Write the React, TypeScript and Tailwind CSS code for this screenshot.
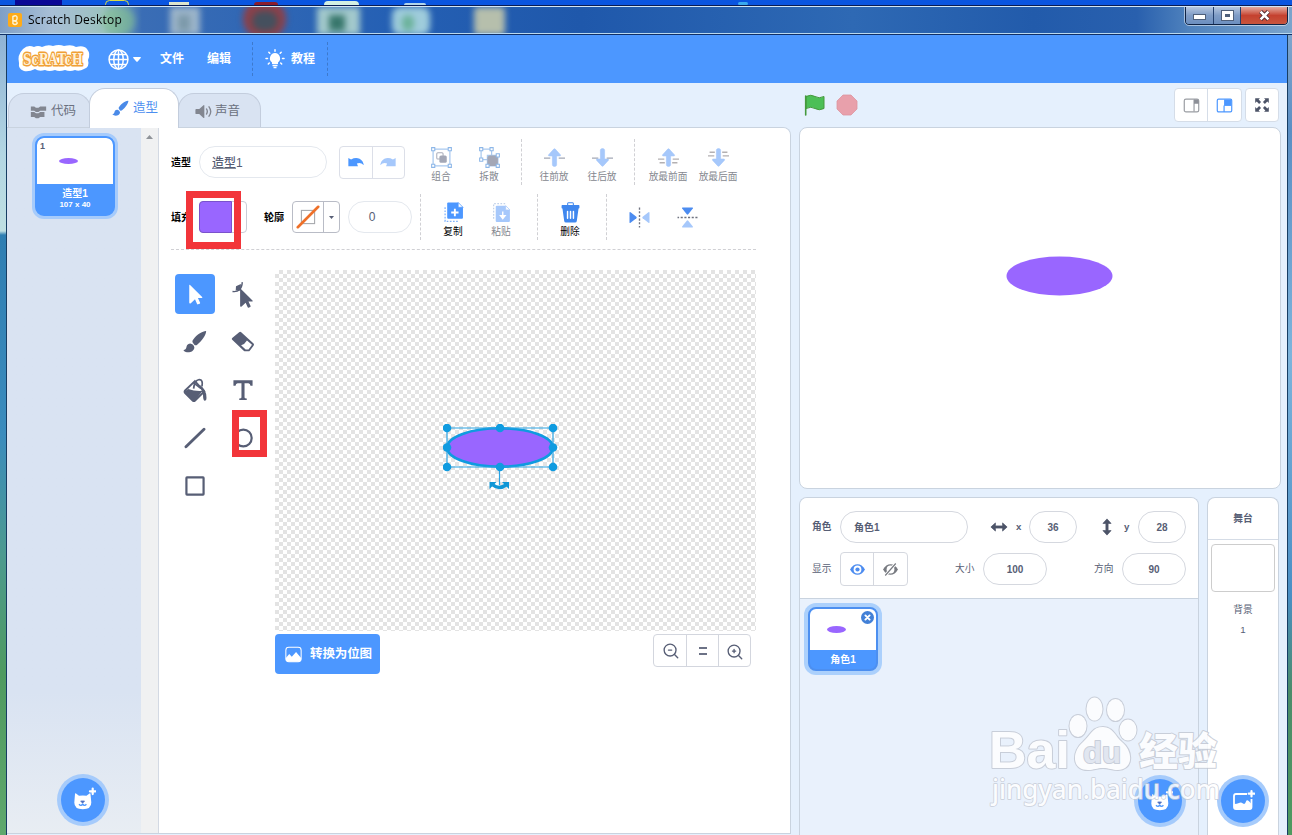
import type { ReactNode } from "react";
import clsx from "clsx";

const FONT =
  "font-['Liberation_Sans','Noto_Sans_CJK_SC',sans-serif]";

interface IconProps {
  size?: number;
  className?: string;
  children: ReactNode;
}

function Icon({ size = 20, className, children }: IconProps) {
  return (
    <svg
      width={size}
      height={size}
      viewBox="0 0 20 20"
      fill="none"
      className={clsx("shrink-0", className)}
      aria-hidden="true"
    >
      {children}
    </svg>
  );
}

/* ---------- window chrome ---------- */

function TitleBar() {
  return (
    <div className="h-[30px] shrink-0 border-t border-[#0a1c52] flex flex-col">
      <div className="relative flex-1 border-t border-[#d3e6f5] border-b border-b-[#b9d9f0] bg-[linear-gradient(90deg,#7f9fc6_0%,#a8bfd6_4%,#9cc2c0_8%,#3a6db5_11%,#2560b4_30%,#1f58ab_45%,#2e69b4_66%,#225bab_80%,#2960ae_88%,#4f82bd_92%,#7ba4cc_100%)] flex justify-between overflow-hidden">
        {/* blurred desktop icons behind the glass */}
        <div className="absolute inset-0 blur-[3px]" aria-hidden="true">
          <div className="absolute left-[102px] top-0 h-7 w-[33px] rounded-full bg-[#86c58d]/60" />
          <div className="absolute left-[170px] top-0 h-7 w-[30px] bg-[#b6c8cf]/80" />
          <div className="absolute left-[178px] top-2 h-4 w-3 bg-[#6f8d9d]/70" />
          <div className="absolute left-[243px] -top-2 h-10 w-[43px] rounded-full bg-[#8c4049]" />
          <div className="absolute left-[252px] top-1 h-5 w-[26px] rounded-full bg-[#45505e]" />
          <div className="absolute left-[317px] top-0 h-7 w-[43px] bg-[#a3c9cc]" />
          <div className="absolute left-[329px] top-2 h-4 w-[16px] bg-[#38776c]" />
          <div className="absolute left-[392px] top-0 h-7 w-[38px] rounded-lg bg-[#9fccdb]" />
          <div className="absolute left-[402px] top-2 h-4 w-[12px] rounded-full bg-[#6bb29a]" />
          <div className="absolute left-[474px] top-0 h-7 w-[31px] rounded bg-[#b6bfac]" />
        </div>
        <div className="relative flex items-center pl-2">
          <Icon size={14}>
            <rect width="20" height="20" rx="3" fill="#ffab19" />
            <path d="M7 5q6-3 6 2t-5 4q6 1 5 4-3 3-6 0z" stroke="#fff3d2" strokeWidth="2" />
          </Icon>
          <span className="ml-1.5 font-['Open_Sans',sans-serif] text-[12px] tracking-[0.22px] text-black whitespace-nowrap">
            Scratch Desktop
          </span>
        </div>
        <div className="relative mr-1 flex h-[18px] w-[103px] rounded-b-[4px] border border-t-0 border-[#0f2344] overflow-hidden outline outline-white/50">
          <div className="w-[28px] border-r border-[#24406e] bg-linear-to-b from-[#b5c6df] via-[#7f9cc6] to-[#6c8fbf] flex justify-center items-end pb-[5px]">
            <span className="h-1 w-[11px] bg-white outline outline-[#4f607b]" />
          </div>
          <div className="w-[27px] border-r border-[#24406e] bg-linear-to-b from-[#b5c6df] via-[#7f9cc6] to-[#6c8fbf] flex justify-center items-center">
            <span className="h-[9px] w-[11px] border-[3px] border-white bg-[#4f607b] outline outline-[#4f607b]" />
          </div>
          <div className="flex-1 bg-linear-to-b from-[#e2a9a0] via-[#c5412f] to-[#c8553d] flex justify-center items-center">
            <Icon size={13}>
              <path d="M4 4l12 12M16 4L4 16" stroke="#4b2b33" strokeWidth="6.500" />
              <path d="M4 4l12 12M16 4L4 16" stroke="#fff" strokeWidth="4" />
            </Icon>
          </div>
        </div>
      </div>
      <div className="h-px bg-[#102f66]" />
    </div>
  );
}

function MenuBar() {
  return (
    <div className="h-12 shrink-0 bg-[#4c97ff] flex items-center text-white text-[12px] font-bold">
      <svg width="80" height="36" viewBox="0 0 80 36" className="ml-[7px]">
        <path
          d="M9 8q5-5 11-2 4-2 8 0 6-3 11-1 6-2 11 0 8-2 12 1 8-2 11 2 4 5 1 11 2 7-4 9-5 3-9 1-5 2-10 0-6 2-10 0-6 2-10 0-6 2-10-1-6 3-11 2-6-2-5-8-2-8 4-14z"
          fill="#fff"
        />
        <text
          x="9"
          y="24"
          fontFamily="'DejaVu Serif', serif"
          fontWeight="bold"
          fontSize="17"
          textLength="60"
          lengthAdjust="spacingAndGlyphs"
          fill="#fff0d8"
          stroke="#f0a036"
          strokeWidth="3"
          strokeLinejoin="round"
          paintOrder="stroke"
        >
          ScRATcH
        </text>
      </svg>
      <Icon size={21} className="ml-[14px]">
        <g stroke="#fff" strokeWidth="1.400">
          <circle cx="10" cy="10" r="9" />
          <ellipse cx="10" cy="10" rx="4.500" ry="9" />
          <path d="M10 1v18M1 10h18M2.500 5.300h15M2.500 14.700h15" />
        </g>
      </Icon>
      <svg width="8" height="5" viewBox="0 0 8 5" className="ml-1">
        <path d="M.5 0h7q.8.5 0 1.300L4.700 4.500q-.7.600-1.400 0L.5 1.300Q-.3.500.5 0z" fill="#fff" />
      </svg>
      <span className="ml-[19px] w-6 whitespace-nowrap">文件</span>
      <span className="ml-[23px] w-6 whitespace-nowrap">编辑</span>
      <div className="ml-[21px] h-[34px] border-l border-dashed border-[#3d79cc]" />
      <Icon size={20} className="ml-3">
        <path d="M10 4a5.300 5.300 0 0 0-3 9.500V15h6v-1.500A5.300 5.300 0 0 0 10 4z" fill="#fff" />
        <path d="M7.500 16.500h5M8.500 18.500h3" stroke="#fff" strokeWidth="1.500" />
        <path d="M10 .8v1.400M3.800 3.200l1 1M16.200 3.200l-1 1M1 9.500h1.500M17.500 9.500H19M3.300 15l1-1M16.700 15l-1-1" stroke="#fff" strokeWidth="1.500" strokeLinecap="round" />
      </Icon>
      <span className="ml-1.5 w-6 whitespace-nowrap">教程</span>
      <div className="ml-[12px] h-[34px] border-l border-dashed border-[#3d79cc]" />
    </div>
  );
}

/* ---------- tabs ---------- */

function Tabs() {
  const idle =
    "h-[35px] rounded-t-[16px] border border-b-0 border-[#c3cddd] bg-[#d9e3f2] text-[#6b7180] flex items-center";
  return (
    <div className="h-[45px] -mb-px flex items-end text-[12.5px] whitespace-nowrap">
      <div className={clsx(idle, "ml-px w-[83px] pl-[21px]")}>
        <Icon size={17}>
          <path d="M1 4h4l2 1.500h3L12 4h7v5h-7l-2 1.500H7L5 9H1zM1 10.500h4L7 12h3l2-1.500h5v6h-5L10 18H7l-2-1.500H1z" fill="#828690" />
        </Icon>
        <span className="ml-1">代码</span>
      </div>
      <div className="relative -ml-[2px] h-10 w-[90px] rounded-t-[16px] border border-b-0 border-[#c3cddd] bg-white text-[#4c8ff0] flex items-center pl-[22px]">
        <Brush size={17} color="#4a8ae8" />
        <span className="ml-[4px]">造型</span>
      </div>
      <div className={clsx(idle, "-ml-px w-[83px] pl-4")}>
        <Icon size={17}>
          <path d="M1.500 7h3.500l5-4.500q1-.5 1 .5v14q0 1-1 .5L5 13H1.500q-1 0-1-1V8q0-1 1-1z" fill="#828690" />
          <path d="M13.500 7q2 3 0 6M16.500 4.500q4 5.500 0 11" stroke="#828690" strokeWidth="1.600" strokeLinecap="round" />
        </Icon>
        <span className="ml-[3px]">声音</span>
      </div>
    </div>
  );
}

function Brush({ size, color }: { size: number; color: string }) {
  return (
    <Icon size={size}>
      <path d="M18.800.8C15 1.200 9.500 5.500 7.800 9.200q-.4 1.100 1.800 3.200 1.200.8 2.200-.2C15.500 9.500 19 4.500 19.300 1.300q0-.6-.5-.5z" fill={color} />
      <path d="M6.600 11.400q2.500.6 2.900 3.300C8.800 18.500 3.500 19.800.6 17.200q-.4-.6.600-.7c1.900-.4 1.300-2.300 2.300-3.900q1.100-1.500 3.100-1.200z" fill={color} />
    </Icon>
  );
}

/* ---------- costume list ---------- */

function AddButton({ className, children }: { className: string; children: ReactNode }) {
  return (
    <button
      className={clsx(
        "absolute size-[44px] rounded-full bg-[#4c97ff] ring-4 ring-[#a6cbfb] flex items-center justify-center",
        className,
      )}
    >
      {children}
    </button>
  );
}

function CatIcon() {
  return (
    <svg width="26" height="26" viewBox="0 0 26 26">
      <path d="M5 7q0-1 1-.5l3 2.300q4-.6 7.500 0L19.500 6.500q1-.5 1 .5l.8 8.500q0 6.800-8.500 6.800t-8.500-6.800z" fill="#fff" />
      <path d="M10.700 14h3.800l-1.900 2.200z" fill="#4c6fc0" stroke="#4c6fc0" strokeWidth=".8" />
      <path d="M9 17.300q2 2.200 3.700 0 1.700 2.200 3.700 0" stroke="#4c97ff" strokeWidth="1.400" fill="none" />
      <path d="M22.700 1.500v5.600M19.900 4.300h5.600" stroke="#fff" strokeWidth="2.200" strokeLinecap="round" />
    </svg>
  );
}

function CostumeList() {
  return (
    <div className="relative w-[134px] bg-linear-to-b from-[#d9e3f2] from-80% to-[#e8edf3] pt-[8px]">
      <div className="ml-[28px] size-[80px] rounded-[9px] border-2 border-[#4c97ff] ring-[3px] ring-[#a6cbfb] bg-[#4c97ff] overflow-hidden">
        <div className="h-[46px] rounded-t-[6px] bg-white px-[3px] py-[2px] text-[9px] leading-[12px] text-[#575e75] font-bold">
          1
          <div className="ml-[19px] mt-[6px] h-[6px] w-[19px] rounded-[50%] bg-[#9966ff]" />
        </div>
        <div className="pt-[3px] text-center text-white font-bold">
          <div className="text-[10px] leading-[13px]">造型1</div>
          <div className="text-[8px] leading-[10px]">107 x 40</div>
        </div>
      </div>
      <AddButton className="left-[54px] bottom-[11px]">
        <CatIcon />
      </AddButton>
    </div>
  );
}

/* ---------- paint editor ---------- */

interface ToolButtonProps {
  label?: string;
  dim?: boolean;
  wide?: boolean;
  children: ReactNode;
}

function ToolButton({ label, dim, wide, children }: ToolButtonProps) {
  return (
    <button
      className={clsx(
        "flex flex-col items-center justify-center shrink-0 h-[46px]",
        wide ? "w-[50px]" : "w-12",
        label && "pt-[5px]",
      )}
    >
      {children}
      {label && (
        <span
          className={clsx(
            "mt-[2px] text-[9.7px] leading-[13px] whitespace-nowrap",
            dim ? "text-[#85888f]" : "text-black",
          )}
        >
          {label}
        </span>
      )}
    </button>
  );
}

function Divider({ className }: { className: string }) {
  return <div className={clsx("h-[46px] w-px shrink-0 border-l border-dashed border-[#d0d0d4]", className)} />;
}

function Arrow({ down, lines }: { down?: boolean; lines: number }) {
  const rotate = down ? "rotate(180 10 10)" : undefined;
  return (
    <Icon size={21}>
      {lines === 1 ? (
        <path d="M0 10.500h6M14 10.500h6" stroke="#a3a8b5" strokeWidth="1.200" />
      ) : (
        <path
          d={down ? "M1.500 5h5M13.500 5h5M0 8.500h6M14 8.500h6" : "M0 11.500h6M14 11.500h6M1.500 15h5M13.500 15h5"}
          stroke="#b3b0b2"
          strokeWidth="1.200"
        />
      )}
      <path d="M9.300 2Q10 1.300 10.700 2l5 5.500q.5 1-.7 1H12v8.500q0 1.500-2 1.500t-2-1.500V8.500H5q-1.200 0-.7-1z" fill="#a6c8fb" stroke="#a6c8fb" strokeWidth=".6" transform={rotate} />
    </Icon>
  );
}

const UNDO = "M1.500 5.500l3 1.800Q9.500 4.500 14 6.500q4 2.200 4.700 7.200-3.500-3.700-7.700-2l1.200 3H1.500z";

function PaintToolbar() {
  return (
    <div className="ml-3 mr-[34px] pt-[11px] pb-[9px] border-b border-dashed border-[#d0d0d4] flex flex-col gap-[9px] text-[#575e75]">
      <div className="flex items-center h-[46px]">
        <span className="w-7 text-[10px] font-bold text-black whitespace-nowrap">造型</span>
        <div className="w-32 h-8 rounded-full border border-[#e4e8ee] flex items-center pl-3 pt-px text-[12px] font-medium">
          <span className="underline decoration-[#8b8f9c] underline-offset-1">造型</span>1
        </div>
        <div className="ml-3 w-[66px] h-[33px] flex rounded border border-[#dcdfe8]">
          <button className="flex-1 flex items-center justify-center border-r border-[#dcdfe8]">
            <Icon size={18}>
              <path d={UNDO} fill="#4c97ff" />
            </Icon>
          </button>
          <button className="flex-1 flex items-center justify-center">
            <Icon size={18} className="-scale-x-100">
              <path d={UNDO} fill="#a6c8fb" />
            </Icon>
          </button>
        </div>
        <div className="ml-3 flex">
          <ToolButton label="组合" dim>
            <Icon size={21}>
              <path d="M2 2h16v16H2z" stroke="#a9c9ef" strokeWidth="1.200" />
              <path d="M.6.600h3v3h-3zM16.400.600h3v3h-3zM.6 16.400h3v3h-3zM16.400 16.400h3v3h-3z" fill="#fff" stroke="#8db7e8" />
              <rect x="5.500" y="5.500" width="6" height="6" rx="1" stroke="#a9adba" />
              <rect x="8" y="8" width="7" height="7" rx="1.500" fill="#a3a7b6" />
            </Icon>
          </ToolButton>
          <ToolButton label="拆散" dim>
            <Icon size={21}>
              <path d="M2 2h10v10H2zM8 8h10v10H8z" stroke="#a9c9ef" strokeWidth="1.200" />
              <rect x="8" y="8" width="10" height="10" rx="2.500" fill="#a3a7b6" />
              <path d="M.6.600h3v3h-3zM10.500.600h3v3h-3zM.6 10.500h3v3h-3zM16.400 6.500h3v3h-3zM6.600 16.400h3v3h-3zM16.400 16.400h3v3h-3z" fill="#fff" stroke="#8db7e8" />
            </Icon>
          </ToolButton>
        </div>
        <Divider className="ml-2" />
        <div className="ml-2 flex">
          <ToolButton label="往前放" dim>
            <Arrow lines={1} />
          </ToolButton>
          <ToolButton label="往后放" dim>
            <Arrow down lines={1} />
          </ToolButton>
        </div>
        <Divider className="ml-2" />
        <div className="ml-2 flex">
          <ToolButton label="放最前面" dim wide>
            <Arrow lines={2} />
          </ToolButton>
          <ToolButton label="放最后面" dim wide>
            <Arrow down lines={2} />
          </ToolButton>
        </div>
      </div>

      <div className="flex items-center h-[46px]">
        <span className="w-7 text-[10px] font-bold text-black whitespace-nowrap">填充</span>
        <div className="w-12 h-8 flex rounded border border-[#c9ccd6]">
          <div className="-m-px w-[33px] rounded-l border border-[#7a52cc] bg-[#9966ff]" />
        </div>
        <span className="ml-[17px] w-7 text-[10px] font-bold text-black whitespace-nowrap">轮廓</span>
        <div className="w-12 h-8 flex rounded border border-[#b9bcc6]">
          <div className="w-[31px] border-r border-[#b9bcc6] flex items-center justify-center">
            <Icon size={24}>
              <rect x="4.500" y="4.500" width="11" height="11" stroke="#a6a8ad" strokeWidth=".9" />
              <path d="M1.500 18.500L18.500 1.500" stroke="#ee7029" strokeWidth="2.200" strokeLinecap="round" />
            </Icon>
          </div>
          <div className="flex-1 flex items-center justify-center">
            <svg width="5" height="3" viewBox="0 0 5 3">
              <path d="M0 0h5L2.500 3z" fill="#575e75" />
            </svg>
          </div>
        </div>
        <div className="ml-2 w-16 h-8 rounded-full border border-[#e4e8ee] flex items-center justify-center pr-4 text-[12px]">
          0
        </div>
        <Divider className="ml-2" />
        <div className="ml-2 flex">
          <ToolButton label="复制">
            <Icon size={21}>
              <path d="M4 1.500q0-1 1-1h9.500l4.500 4.500v10q0 1-1 1H5q-1 0-1-1z" fill="#4c97ff" />
              <path d="M14.500.5v4.500H19z" fill="#fff" stroke="#4c97ff" strokeWidth=".6" />
              <path d="M11.300 6.500v7M7.800 10h7" stroke="#fff" strokeWidth="1.800" />
              <path d="M2 5v13.500h13" stroke="#7fb2fb" strokeWidth="1.200" strokeDasharray="1.600 1.400" />
            </Icon>
          </ToolButton>
          <ToolButton label="粘贴" dim>
            <Icon size={21}>
              <path d="M2.500 16V1.500h11" stroke="#c3d3ea" strokeWidth="1.200" strokeDasharray="1.600 1.400" />
              <path d="M4.500 4.500q0-1 1-1h8.500l4 4v10.500q0 1-1 1H5.500q-1 0-1-1z" fill="#a6c8fb" />
              <path d="M14 3.500v4h4z" fill="#fff" stroke="#a6c8fb" strokeWidth=".6" />
              <path d="M11.200 9v5M9 13l2.200 2.800L13.400 13z" stroke="#fff" strokeWidth="1.300" fill="#fff" />
            </Icon>
          </ToolButton>
        </div>
        <Divider className="ml-3" />
        <div className="ml-2 flex">
          <ToolButton label="删除">
            <Icon size={21}>
              <path d="M1.500 3.500q0-.7.7-.7h4.600V1.500Q7 .3 8.200.3h3.600Q13 .3 13.200 1.500v1.300h4.600q.7 0 .7.700v2q0 .700-.7.700H2.200q-.7 0-.7-.700zM7.800 1.300v1.500h4.400V1.300zM2.300 6h15.400L16 18q-.2 1.500-1.700 1.500H5.700Q4.200 19.500 4 18z" fill="#3f87ee" />
              <path d="M7.200 9v6.500M10 9v6.500M12.800 9v6.500" stroke="#fff" strokeWidth="1.400" strokeLinecap="round" />
            </Icon>
          </ToolButton>
        </div>
        <Divider className="ml-3" />
        <div className="ml-2 flex">
          <ToolButton>
            <Icon size={21}>
              <path d="M10 .5v19" stroke="#6f7380" strokeWidth="1.300" strokeDasharray="2 1.500" />
              <path d="M.5 5.500q0-1.200 1-.6L7 9.300q.8.700 0 1.400l-5.500 4.400q-1 .6-1-.6z" fill="#4c8cf0" />
              <path d="M19.500 5.500q0-1.200-1-.6L13 9.300q-.8.700 0 1.400l5.500 4.400q1 .6 1-.6z" fill="#a6c8fb" />
            </Icon>
          </ToolButton>
          <ToolButton>
            <Icon size={21} className="rotate-90">
              <path d="M10 .5v19" stroke="#6f7380" strokeWidth="1.300" strokeDasharray="2 1.500" />
              <path d="M.5 5.500q0-1.200 1-.6L7 9.300q.8.700 0 1.400l-5.500 4.400q-1 .6-1-.6z" fill="#4c8cf0" />
              <path d="M19.500 5.500q0-1.200-1-.6L13 9.300q-.8.700 0 1.400l5.500 4.400q1 .6 1-.6z" fill="#a6c8fb" />
            </Icon>
          </ToolButton>
        </div>
      </div>
    </div>
  );
}

const POINTER = "M4.500 1.200q0-1 .8-.3l11.500 11.500q.8.900-.4.900h-3.600l2.100 4.500q.2.600-.4.900l-1.600.700q-.6.200-.9-.4l-2-4.600-4 3.900q-1.500.800-1.500-.8z";

// 绘图工具（两列）
const tools: { name: string; icon: ReactNode }[] = [
  {
    name: "选择",
    icon: (
      <Icon size={22}>
        <path d={POINTER} fill="#fff" transform="translate(.5 1) scale(.95)" />
      </Icon>
    ),
  },
  {
    name: "变形",
    icon: (
      <Icon size={28}>
        <path d={POINTER} fill="#575e75" transform="translate(4.700 5.800) scale(.72)" />
        <path d="M2.500 8.200Q9 9 9.500 1.500" stroke="#575e75" strokeWidth="1" />
        <path d="M5 4.500l3.500-1.700v4.700H4.800z" fill="#575e75" />
      </Icon>
    ),
  },
  { name: "画笔", icon: <Brush size={24} color="#575e75" /> },
  {
    name: "橡皮擦",
    icon: (
      <Icon size={24}>
        <path d="M6.800 1.800q.9-.7 1.700 0l10.300 9.400q.8.900 0 1.900l-3 4q-.5.700-1.300.7h-2.700q-.7 0-1.200-.5L1 8.200q-.8-.900 0-1.600z" fill="#575e75" />
        <path d="M13.300 8.700l4.200 3.600-2.900 4h-2.400L8.400 12.800q2.800-.7 4.900-4.100z" fill="#fff" />
      </Icon>
    ),
  },
  {
    name: "填充",
    icon: (
      <Icon size={25}>
        <path d="M9.500 2.500L1.700 10q-.9 1 0 2l6 6q1 .9 2 0l7.300-7.300z" stroke="#575e75" strokeWidth="1.500" />
        <path d="M1.500 10.500l2.800-1.800q5 2 11.500 1.500l-6 7.500q-1 1-2 0l-6-6z" fill="#575e75" />
        <path d="M8.500 8.500Q9 2 13 1.200q3.200 0 2.200 5.500M8 3.500l6.500 5" stroke="#575e75" strokeWidth="1.400" />
        <path d="M13.500 5.500q5.500 3.500 5.300 10.500 0 2.500-1.500 2.200-1.300-.7-1.300-4.700z" fill="#575e75" />
      </Icon>
    ),
  },
  {
    name: "文本",
    icon: (
      <Icon size={22}>
        <path d="M1.300 1.200h17.400v5h-1.900q-.2-2.400-1.900-2.400h-3.500v13q0 .9 2 1v1.400H6.600v-1.400q2-.1 2-1v-13H5.100q-1.700 0-1.900 2.400H1.300z" fill="#575e75" />
      </Icon>
    ),
  },
  {
    name: "线段",
    icon: (
      <Icon size={22}>
        <path d="M1.800 18L18.200 2" stroke="#575e75" strokeWidth="2.600" strokeLinecap="round" />
      </Icon>
    ),
  },
  {
    name: "圆",
    icon: (
      <Icon size={22}>
        <circle cx="10.300" cy="10" r="7.600" stroke="#575e75" strokeWidth="2" />
      </Icon>
    ),
  },
  {
    name: "矩形",
    icon: (
      <Icon size={22}>
        <rect x="2.200" y="2.200" width="15.600" height="15.600" rx=".5" stroke="#575e75" strokeWidth="2" />
      </Icon>
    ),
  },
];

function Canvas() {
  const handles = [
    [4, 4], [57, 4], [110, 4],
    [4, 23.5], [110, 23.5],
    [4, 43], [57, 43], [110, 43],
  ];
  return (
    <div className="relative w-[481px] h-[361px] bg-[repeating-conic-gradient(#e3e3e3_0%_25%,#fff_0%_50%)] bg-[length:8px_8px]">
      <svg width="118" height="72" viewBox="0 0 118 72" className="absolute left-[168px] top-[154px]" fill="none">
        <ellipse cx="57" cy="23.500" rx="53" ry="19.200" fill="#9966ff" stroke="#0f9be0" strokeWidth="2.600" />
        <path d="M4 4h106v39H4zM56.500 43v18" stroke="#2ba3e3" strokeWidth="1.200" />
        {handles.map(([x, y]) => (
          <circle key={`${x}-${y}`} cx={x} cy={y} r="4.300" fill="#0f9be0" />
        ))}
        <path d="M50 61q6 5 13 0" stroke="#0f96d6" strokeWidth="3.400" />
        <path d="M46.500 58h7l-7 7zM66 58h-7l7 7z" fill="#0f96d6" />
      </svg>
    </div>
  );
}

function Magnifier({ plus }: { plus?: boolean }) {
  return (
    <Icon size={17}>
      <g stroke="#575e75" strokeWidth="1.600" strokeLinecap="round">
        <circle cx="9.500" cy="9.500" r="7" />
        <path d={plus ? "M15 15l3.500 3.500M7.600 9.500h3.800M9.500 7.600v3.800" : "M15 15l3.500 3.500M7.600 9.500h3.800"} />
      </g>
    </Icon>
  );
}

function PaintEditor() {
  return (
    <div className="flex-1 bg-white border-l border-[#d3d9e3]">
      <PaintToolbar />
      <div className="flex pt-5">
        <div className="ml-4 mt-1 mr-[12px] grid grid-cols-2 gap-2 content-start">
          {tools.map((tool, i) => (
            <button
              key={tool.name}
              aria-label={tool.name}
              className={clsx(
                "size-10 rounded flex items-center justify-center",
                i === 0 && "bg-[#4c97ff]",
              )}
            >
              {tool.icon}
            </button>
          ))}
        </div>
        <div>
          <Canvas />
          <div className="mt-[3px] pr-[5px] flex items-start justify-between">
            <button className="w-[105px] h-10 rounded bg-[#4c97ff] text-white text-[12.5px] font-bold flex items-center pl-[10px] whitespace-nowrap">
              <Icon size={17}>
                <rect x="1" y="1.500" width="18" height="17" rx="3.500" stroke="#fff" strokeWidth="1.200" />
                <path d="M1 14l4-4.500 3 3 5-5.500 6 7v2q0 2.500-2.500 2.500h-13Q1 18.500 1 16z" fill="#fff" />
              </Icon>
              <span className="ml-2 tracking-[-0.1px]">转换为位图</span>
            </button>
            <div className="w-[98px] h-[33px] pt-px rounded border border-[#d3d6de] flex">
              <button className="w-[33px] -mt-px border-r border-[#d3d6de] flex items-center justify-center">
                <Magnifier />
              </button>
              <button className="w-[32px] -mt-px border-r border-[#d3d6de] flex items-center justify-center">
                <span className="h-2 w-2 border-y-2 border-[#6c7286]" />
              </button>
              <button className="flex-1 flex items-center justify-center">
                <Magnifier plus />
              </button>
            </div>
          </div>
        </div>
      </div>
    </div>
  );
}

/* ---------- stage column ---------- */

function StageHeader() {
  return (
    <div className="h-11 flex items-center pl-[5px] pr-[2px]">
      <svg width="22" height="22" viewBox="0 0 22 22" fill="none">
        <path d="M2 2.500q5-2.500 9 0t9 0v12q-5 2.500-9 0t-9 0z" fill="#4cbf56" stroke="#45993d" />
        <path d="M1.700 2v19" stroke="#45993d" strokeWidth="1.600" strokeLinecap="round" />
      </svg>
      <svg width="22" height="22" viewBox="0 0 22 22" className="ml-[10px]">
        <path d="M7 1h8l6 6v8l-6 6H7l-6-6V7z" fill="#e8a0ab" stroke="#dd949f" strokeWidth=".8" />
      </svg>
      <div className="ml-auto w-[68px] h-[34px] rounded border border-[#d5dde8] bg-white flex">
        <button className="w-[33px] flex items-center justify-center border-r border-[#d5dde8]">
          <Icon size={17}>
            <rect x="1.500" y="2.500" width="17" height="15" rx="2" stroke="#9a9da3" strokeWidth="1.400" />
            <path d="M13 3v14" stroke="#9a9da3" strokeWidth="1.400" />
            <path d="M13 3h4l1.500 1.500V8H13z" fill="#8c8f97" />
          </Icon>
        </button>
        <button className="flex-1 flex items-center justify-center">
          <Icon size={17}>
            <rect x="1.500" y="2.500" width="17" height="15" rx="1.500" stroke="#4c97ff" strokeWidth="1.400" />
            <path d="M9.500 3H18v7.500H9.500z" fill="#4c97ff" />
            <path d="M9.500 10v7.500" stroke="#4c97ff" strokeWidth="1.400" />
          </Icon>
        </button>
      </div>
      <button className="ml-[3px] size-[34px] rounded border border-[#d5dde8] bg-white flex items-center justify-center">
        <Icon size={16}>
          <path d="M1.500 1.500h6L5.800 3.200l3 3-2.400 2.400-3-3L1.500 7.500zM18.500 1.500h-6l1.700 1.700-3 3 2.400 2.400 3-3 1.900 1.900zM1.500 18.500h6l-1.700-1.700 3-3-2.400-2.400-3 3-1.900-1.900zM18.500 18.500h-6l1.700-1.700-3-3 2.400-2.400 3 3 1.900-1.900z" fill="#4d5468" />
        </Icon>
      </button>
    </div>
  );
}

function Field({ className, children }: { className: string; children: ReactNode }) {
  return (
    <div
      className={clsx(
        "h-8 rounded-full border border-[#d5d8df] flex items-center text-[10px] font-bold",
        className,
      )}
    >
      {children}
    </div>
  );
}

function SpriteInfo() {
  return (
    <div className="h-[101px] border-b border-[#c9d3df] bg-white text-[#575e75] text-[9.7px] whitespace-nowrap pt-[13px]">
      <div className="flex items-center h-8">
        <span className="ml-3 mt-px w-[28px] font-bold">角色</span>
        <Field className="w-32 pl-[13px]">角色1</Field>
        <Icon size={18} className="ml-[22px]">
          <path d="M1 10l5-4.500v3.300h8V5.500l5 4.500-5 4.500v-3.300H6v3.300z" fill="#4d5468" stroke="#4d5468" strokeWidth=".8" strokeLinejoin="round" />
        </Icon>
        <span className="ml-2 mt-px w-[13px] font-bold">x</span>
        <Field className="w-12 justify-center">36</Field>
        <Icon size={18} className="ml-[21px] rotate-90">
          <path d="M1 10l5-4.500v3.300h8V5.500l5 4.500-5 4.500v-3.300H6v3.300z" fill="#4d5468" stroke="#4d5468" strokeWidth=".8" strokeLinejoin="round" />
        </Icon>
        <span className="ml-2 mt-px w-[14px] font-bold">y</span>
        <Field className="w-12 justify-center">28</Field>
      </div>
      <div className="flex items-center h-[34px] mt-[9px]">
        <span className="ml-3 mt-px w-[28px]">显示</span>
        <div className="w-[68px] h-[34px] rounded border border-[#d5d8df] flex">
          <button className="w-[33px] border-r border-[#d5d8df] flex items-center justify-center">
            <Icon size={15}>
              <path d="M0 10q4-7 10-7t10 7q-4 7-10 7T0 10z" fill="#4c8cf0" />
              <circle cx="10" cy="10" r="5.200" fill="#fff" />
              <circle cx="10" cy="10" r="2.800" fill="#4c8cf0" />
            </Icon>
          </button>
          <button className="flex-1 flex items-center justify-center">
            <Icon size={15}>
              <path d="M0 10q4-7 10-7t10 7q-4 7-10 7T0 10z" fill="#777a80" />
              <circle cx="10" cy="10" r="5.200" fill="#fff" />
              <path d="M3 18L17 2" stroke="#fff" strokeWidth="4" />
              <path d="M3 18L17 2" stroke="#777a80" strokeWidth="1.600" />
            </Icon>
          </button>
        </div>
        <span className="ml-[47px] mt-px w-[28px]">大小</span>
        <Field className="w-16 justify-center">100</Field>
        <span className="ml-[47px] mt-px w-[28px]">方向</span>
        <Field className="w-16 justify-center">90</Field>
      </div>
    </div>
  );
}

function SpritePane() {
  return (
    <div className="w-[400px] rounded-t-lg border border-b-0 border-[#c9d3df] bg-[#e9f1fc] overflow-hidden">
      <SpriteInfo />
      <div className="relative mt-2 ml-2 w-[70px] h-16 rounded-[8px] border-2 border-[#4c8ff0] ring-4 ring-[#abd0fc] bg-[#4c97ff]">
        <div className="h-[41px] rounded-t-[6px] bg-white pt-[17px] pl-[17px]">
          <div className="h-[7px] w-[19px] rounded-[50%] bg-[#9966ff]" />
        </div>
        <div className="text-center text-white text-[10px] leading-[20px] font-bold">角色1</div>
        <div className="absolute right-[2px] top-[2px] size-[13px] rounded-full bg-[#4280d7] flex items-center justify-center">
          <Icon size={7}>
            <path d="M4 4l12 12M16 4L4 16" stroke="#fff" strokeWidth="5.500" strokeLinecap="round" />
          </Icon>
        </div>
      </div>
    </div>
  );
}

function StagePane() {
  return (
    <div className="ml-2 w-[72px] rounded-t-lg border border-b-0 border-[#c9d3df] bg-white text-center text-[#575e75] text-[9.7px]">
      <div className="h-[42px] leading-[42px] border-b border-[#d5dce6] font-bold">舞台</div>
      <div className="mt-1 mx-[3px] h-12 rounded border border-[#cdcdcd]" />
      <div className="mt-[11px] leading-[14px]">背景</div>
      <div className="mt-[6px] leading-[14px]">1</div>
    </div>
  );
}

/* ---------- overlays ---------- */

function Watermark() {
  return (
    <svg
      width="250"
      height="130"
      viewBox="0 0 250 130"
      className="absolute left-[985px] top-[692px] opacity-85"
      fill="#fff"
      stroke="#c3c8d3"
      strokeWidth="2"
      strokeLinejoin="round"
      paintOrder="stroke"
    >
      <text x="4" y="75.500" fontFamily="'Liberation Sans', sans-serif" fontWeight="bold" fontSize="52" textLength="81" lengthAdjust="spacingAndGlyphs">Bai</text>
      <ellipse cx="93" cy="34" rx="8.500" ry="11" />
      <ellipse cx="109.500" cy="17" rx="8" ry="11.500" />
      <ellipse cx="130.500" cy="18" rx="8.500" ry="11" />
      <ellipse cx="143" cy="38" rx="8.500" ry="10.500" />
      <path d="M118 35c10 0 12 9 19 15 11 9 12 27-4 28-6 0-9-2-15-2s-9 2-15 2c-17 0-16-19-5-28 8-7 9-15 20-15z" />
      <text x="98" y="71" fontFamily="'Liberation Sans', sans-serif" fontWeight="bold" fontSize="30" fill="#e0e5ef" textLength="38" lengthAdjust="spacingAndGlyphs">du</text>
      <text x="154" y="73" fontFamily="'Noto Sans CJK SC', sans-serif" fontWeight="900" fontSize="39" textLength="78">经验</text>
      <text x="7" y="107" fontFamily="'Noto Sans', sans-serif" fontSize="27" fontWeight="500" strokeWidth="1.500" textLength="228" lengthAdjust="spacingAndGlyphs">jingyan.baidu.com</text>
    </svg>
  );
}

export default function App() {
  return (
    <div className={clsx("relative w-[1292px] h-[835px] overflow-hidden flex flex-col bg-[#0a55e0]", FONT)}>
      {/* desktop wallpaper above the window */}
      <div className="h-[5px] shrink-0 flex">
        <div className="ml-[15px] w-[47px] bg-[#0b0795]" />
        <div className="ml-[43px] w-6 h-[9px] rounded-full border border-[#d9dc45]" />
        <div className="ml-[40px] mt-[2px] w-5 bg-[#dce4cd]" />
        <div className="ml-[65px] mt-[2px] w-6 rounded-t-full bg-[#8c1d2c]" />
        <div className="ml-[46px] mt-[1px] w-[35px] rounded-t bg-[#d3efe3]" />
        <div className="ml-[45px] mt-[3px] w-[22px] rounded-t bg-[#b3d5ea]" />
        <div className="ml-[312px] mt-[2px] w-2.5 rounded-full bg-[#39a9ef]" />
      </div>
      <TitleBar />
      <div className="flex-1 flex min-h-0">
        <div className="w-[7px] shrink-0 border-r border-r-[#173d63] bg-[linear-gradient(180deg,#8fb3d5_0%,#b3d6e3_15%,#bfdfe2_24.500%,#2f7eb2_25%,#3b8cbd_50%,#4c9a8f_65%,#4f9a5f_80%,#5fa86d_100%)]" />
        <div className="flex-1 min-w-0 flex flex-col">
          <MenuBar />
          <div className="flex-1 min-h-0 flex bg-[#e5f0fd]">
            <div className="w-[784px] flex flex-col">
              <Tabs />
              <div className="flex-1 mb-px flex border border-l-0 border-[#c9d3df] rounded-tr-lg overflow-hidden">
                <CostumeList />
                <div className="w-[17px] bg-[#f0f1f2] flex justify-center pt-[7px]">
                  <svg width="7" height="4" viewBox="0 0 7 4">
                    <path d="M3.500 0L7 4H0z" fill="#8f9399" />
                  </svg>
                </div>
                <PaintEditor />
              </div>
            </div>
            <div className="ml-2 w-[482px] flex flex-col">
              <StageHeader />
              <div className="h-[362px] shrink-0 rounded-lg border border-[#c9d3df] bg-white">
                <svg width="480" height="360" viewBox="0 0 480 360">
                  <ellipse cx="259.500" cy="148" rx="53" ry="19.500" fill="#9966ff" />
                </svg>
              </div>
              <div className="mt-2 flex-1 flex">
                <SpritePane />
                <StagePane />
              </div>
            </div>
          </div>
        </div>
        <div className="w-[5px] shrink-0 border-l border-[#173d63] bg-[linear-gradient(180deg,#7fa5cd_0%,#5b8fc4_12%,#7db4dc_40%,#4a8fc5_70%,#4b8c6a_82%,#4f9a5f_100%)]" />
      </div>

      <AddButton className="left-[1138px] top-[779px]">
        <CatIcon />
      </AddButton>
      <AddButton className="left-[1221px] top-[779px]">
        <svg width="24" height="24" viewBox="0 0 24 24" fill="none">
          <path d="M16 5H5Q3 5 3 7v11q0 2 2 2h13.500q2 0 2-2v-8" stroke="#fff" strokeWidth="1.800" />
          <path d="M3 15q3 0 5-1t4 .5 3-2 5.500 2.500v3q0 2-2 2H5q-2 0-2-2z" fill="#fff" />
          <path d="M20.500 2v5.500M17.700 4.700h5.600" stroke="#fff" strokeWidth="2.200" strokeLinecap="round" />
        </svg>
      </AddButton>
      <Watermark />

      {/* tutorial highlights */}
      <div className="absolute left-[186px] top-[191px] w-[55px] h-[58px] border-[7px] border-[#f2353a]" />
      <div className="absolute left-[232px] top-[410px] w-[35px] h-[47px] border-[7px] border-[#f2353a]" />
    </div>
  );
}
